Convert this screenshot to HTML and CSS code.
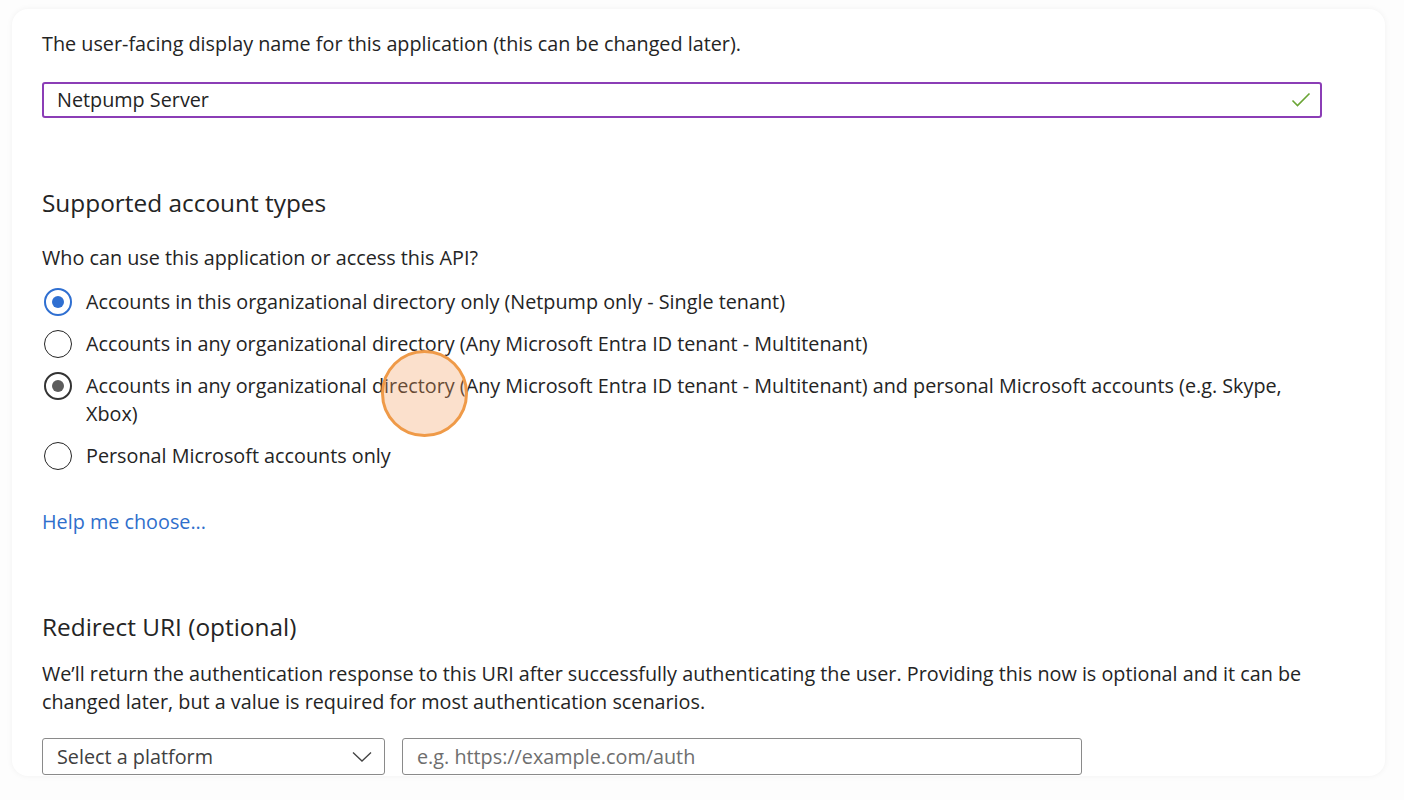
FILE: index.html
```html
<!DOCTYPE html>
<html lang="en">
<head>
<meta charset="utf-8">
<title>Register an application</title>
<link rel="stylesheet" href="styles.css">
</head>
<body>
<div class="card">
  <p class="text">The user-facing display name for this application (this can be changed later).</p>
  <div class="name-field">
    <span class="name-value">Netpump Server</span>
    <svg class="check" width="20" height="16" viewBox="0 0 20 16"><polyline points="1.5,8.5 6.5,13.5 18.5,1.5" fill="none" stroke="#6aa535" stroke-width="1.6"/></svg>
  </div>

  <h2 class="heading first">Supported account types</h2>
  <p class="text question">Who can use this application or access this API?</p>
  <div class="options">
    <div class="option"><span class="radio checked"></span><span class="label">Accounts in this organizational directory only (Netpump only - Single tenant)</span></div>
    <div class="option"><span class="radio"></span><span class="label">Accounts in any organizational directory (Any Microsoft Entra ID tenant - Multitenant)</span></div>
    <div class="option"><span class="radio pressed"></span><span class="label">Accounts in any organizational directory (Any Microsoft Entra ID tenant - Multitenant) and personal Microsoft accounts (e.g. Skype, Xbox)</span></div>
    <div class="option"><span class="radio"></span><span class="label">Personal Microsoft accounts only</span></div>
  </div>
  <a class="help" href="#">Help me choose...</a>

  <h2 class="heading second">Redirect URI (optional)</h2>
  <p class="text desc">We’ll return the authentication response to this URI after successfully authenticating the user. Providing this now is optional and it can be changed later, but a value is required for most authentication scenarios.</p>
  <div class="uri-row">
    <div class="select">
      <span>Select a platform</span>
      <svg width="20" height="12" viewBox="0 0 20 12"><polyline points="1,1.5 10,10 19,1.5" fill="none" stroke="#424242" stroke-width="1.3"/></svg>
    </div>
    <div class="uri-input">e.g. https://example.com/auth</div>
  </div>
  <div class="click-marker"></div>
</div>
</body>
</html>
```
FILE: styles.css
```css
* { box-sizing: border-box; }
html, body { margin: 0; padding: 0; }
body {
  background: #fdfdfd;
  font-family: "Open Sans", "Noto Sans", sans-serif;
  color: #242424;
  font-size: 19.8px;
  line-height: 28px;
  width: 1404px;
  height: 800px;
  overflow: hidden;
  padding: 9px 19px 0 12px;
}
.card {
  position: relative;
  background: #fff;
  border-radius: 16px;
  height: 767px;
  overflow: hidden;
  padding: 21px 0 0 30px;
  box-shadow: 0 0 6px rgba(0,0,0,0.05);
}
.text { margin: 0; }
.name-field {
  margin-top: 24px;
  width: 1280px;
  height: 36px;
  border: 2px solid #8b3db6;
  border-radius: 3px;
  display: flex;
  align-items: center;
  justify-content: space-between;
  padding: 0 9px 0 13px;
}
.check { display: block; }
.heading {
  margin: 0;
  font-weight: 400;
  font-size: 24.4px;
  line-height: 32px;
}
.heading.first { margin-top: 69px; }
.question { margin-top: 25px; }
.options {
  margin-top: 16px;
  display: flex;
  flex-direction: column;
  gap: 14px;
  width: 1280px;
}
.option {
  display: flex;
  align-items: flex-start;
  gap: 12px;
}
.radio {
  flex: none;
  width: 32px;
  height: 28px;
  position: relative;
}
.radio::before {
  content: "";
  position: absolute;
  left: 2px;
  top: 0;
  width: 28px;
  height: 28px;
  border-radius: 50%;
  border: 1.5px solid #242424;
  box-sizing: border-box;
}
.radio.checked::before { border: 2px solid #2f6fd1; }
.radio::after {
  content: "";
  position: absolute;
  left: 10px;
  top: 8px;
  width: 12px;
  height: 12px;
  border-radius: 50%;
  display: none;
}
.radio.checked::after { display: block; background: #2f6fd1; }
.radio.pressed::before { border: 2px solid #333; }
.radio.pressed::after { display: block; background: #5c5c5c; }
.help {
  display: inline-block;
  margin-top: 38px;
  color: #2f6fcc;
  text-decoration: none;
}
.heading.second { margin-top: 75px; }
.desc { margin-top: 17px; width: 1280px; }
.uri-row {
  margin-top: 22px;
  display: flex;
  gap: 17px;
}
.select, .uri-input {
  height: 37px;
  border: 1px solid #8a8a8a;
  border-radius: 3px;
  display: flex;
  align-items: center;
}
.select {
  width: 343px;
  justify-content: space-between;
  padding: 0 12px 0 14px;
  color: #404040;
}
.uri-input {
  width: 680px;
  padding: 0 14px;
  color: #6e6e6e;
}
.click-marker {
  position: absolute;
  left: 369px;
  top: 341px;
  width: 87px;
  height: 87px;
  border-radius: 50%;
  background: rgba(244, 160, 95, 0.32);
  border: 3px solid #ef9a48;
}
```
